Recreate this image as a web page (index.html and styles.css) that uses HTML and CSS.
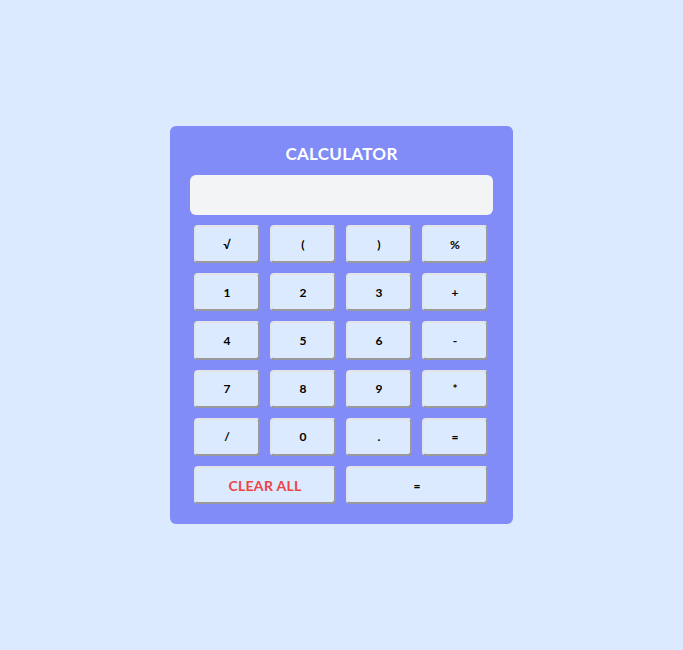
FILE: index.html
```html
<!DOCTYPE html>
<html>
<head>
<meta charset="utf-8">
<link rel="stylesheet" href="styles.css">
</head>
<body>
<div class="page">
  <div class="calc">
    <h1 class="title">CALCULATOR</h1>
    <div class="display"></div>
    <div class="keys">
      <button class="key">√</button>
      <button class="key">(</button>
      <button class="key">)</button>
      <button class="key">%</button>
      <button class="key">1</button>
      <button class="key">2</button>
      <button class="key">3</button>
      <button class="key">+</button>
      <button class="key">4</button>
      <button class="key">5</button>
      <button class="key">6</button>
      <button class="key">-</button>
      <button class="key">7</button>
      <button class="key">8</button>
      <button class="key">9</button>
      <button class="key">*</button>
      <button class="key">/</button>
      <button class="key">0</button>
      <button class="key">.</button>
      <button class="key">=</button>
      <button class="key wide clear">CLEAR ALL</button>
      <button class="key wide">=</button>
    </div>
  </div>
</div>
</body>
</html>
```
FILE: styles.css
```css
html, body {
  margin: 0;
  padding: 0;
}
body {
  background: #dbeafe;
  font-family: "Lato", "Noto Sans", sans-serif;
}
.page {
  height: 650px;
  display: flex;
  justify-content: center;
  padding-top: 126px;
  box-sizing: border-box;
}
.calc {
  width: 343px;
  height: 398px;
  box-sizing: border-box;
  background: #818cf8;
  border-radius: 6px;
  padding: 18px 20px 0;
}
.title {
  margin: 0 0 11px;
  font-size: 17px;
  line-height: 20px;
  font-weight: 700;
  color: #ffffff;
  text-align: center;
  letter-spacing: 0.3px;
}
.display {
  height: 40px;
  background: #f3f4f6;
  border-radius: 6px;
}
.keys {
  margin: 10px 5px 0 4px;
  display: grid;
  grid-template-columns: repeat(4, 1fr);
  grid-auto-rows: 38.2px;
  column-gap: 10px;
  row-gap: 10px;
}
.key {
  background: #dbeafe;
  border: 2px solid;
  border-color: #e2e4e8 #9a9a9a #9a9a9a #e2e4e8;
  border-radius: 4px;
  font-family: "Lato", "Noto Sans", sans-serif;
  font-size: 12px;
  font-weight: 700;
  color: #000000;
  padding: 0;
  margin: 0;
}
.wide {
  grid-column: span 2;
}
.clear {
  color: #ef4444;
  font-size: 14px;
  letter-spacing: 0.3px;
}
```
